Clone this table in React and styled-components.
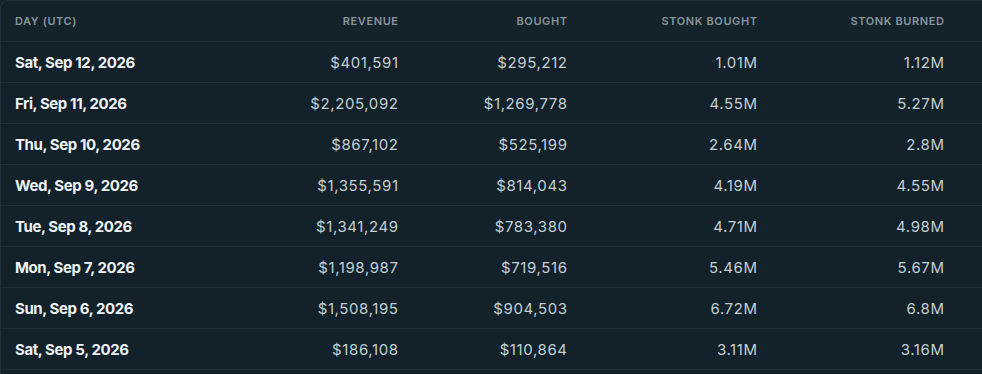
import React from 'react';
import styled, { createGlobalStyle } from 'styled-components';

const GlobalStyle = createGlobalStyle`
  html, body {
    margin: 0;
    padding: 0;
    background: #12212a;
  }
  body {
    font-family: Inter, "Noto Sans", sans-serif;
  }
`;

const rows = [
  ['Sat, Sep 12, 2026', '$401,591', '$295,212', '1.01M', '1.12M'],
  ['Fri, Sep 11, 2026', '$2,205,092', '$1,269,778', '4.55M', '5.27M'],
  ['Thu, Sep 10, 2026', '$867,102', '$525,199', '2.64M', '2.8M'],
  ['Wed, Sep 9, 2026', '$1,355,591', '$814,043', '4.19M', '4.55M'],
  ['Tue, Sep 8, 2026', '$1,341,249', '$783,380', '4.71M', '4.98M'],
  ['Mon, Sep 7, 2026', '$1,198,987', '$719,516', '5.46M', '5.67M'],
  ['Sun, Sep 6, 2026', '$1,508,195', '$904,503', '6.72M', '6.8M'],
  ['Sat, Sep 5, 2026', '$186,108', '$110,864', '3.11M', '3.16M'],
];

const headers = ['Day (UTC)', 'Revenue', 'Bought', 'Stonk Bought', 'Stonk Burned'];

const App = () => {
  return (
    <>
      <GlobalStyle />
      <Card>
        <HeaderRow>
          {headers.map((h, i) => (
            <HeadCell key={h} first={i === 0}>{h}</HeadCell>
          ))}
        </HeaderRow>
        {rows.map((r) => (
          <Row key={r[0]}>
            <DayCell>{r[0]}</DayCell>
            {r.slice(1).map((v, i) => (
              <ValueCell key={i}>{v}</ValueCell>
            ))}
          </Row>
        ))}
      </Card>
    </>
  );
};

const Card = styled.div`
  width: 982px;
  height: 374px;
  box-sizing: border-box;
  background: #12212a;
  border-top: 1px solid #22333b;
  border-left: 1px solid #22333b;
  border-top-left-radius: 8px;
  overflow: hidden;
`;

const RowBase = styled.div`
  display: grid;
  grid-template-columns: 215px 168px 169px 190px 187px;
  padding: 0 38px 0 14px;
  align-items: center;
  border-bottom: 1px solid #1f2f37;
`;

const HeaderRow = styled(RowBase)`
  height: 40px;
  background: #13222b;
`;

const Row = styled(RowBase)`
  height: 40px;
`;

const HeadCell = styled.div`
  font-size: 11px;
  font-weight: 600;
  letter-spacing: 0.6px;
  text-transform: uppercase;
  color: #87959b;
  text-align: ${(p) => (p.first ? 'left' : 'right')};
  margin-right: ${(p) => (p.first ? '0' : '-0.6px')};
`;

const DayCell = styled.div`
  font-size: 15px;
  font-weight: 700;
  color: #eef3f5;
  letter-spacing: -0.4px;
`;

const ValueCell = styled.div`
  font-size: 15px;
  font-weight: 400;
  color: #c3cfd4;
  text-align: right;
  letter-spacing: 0.6px;
  margin-right: -0.6px;
`;

export default App;
